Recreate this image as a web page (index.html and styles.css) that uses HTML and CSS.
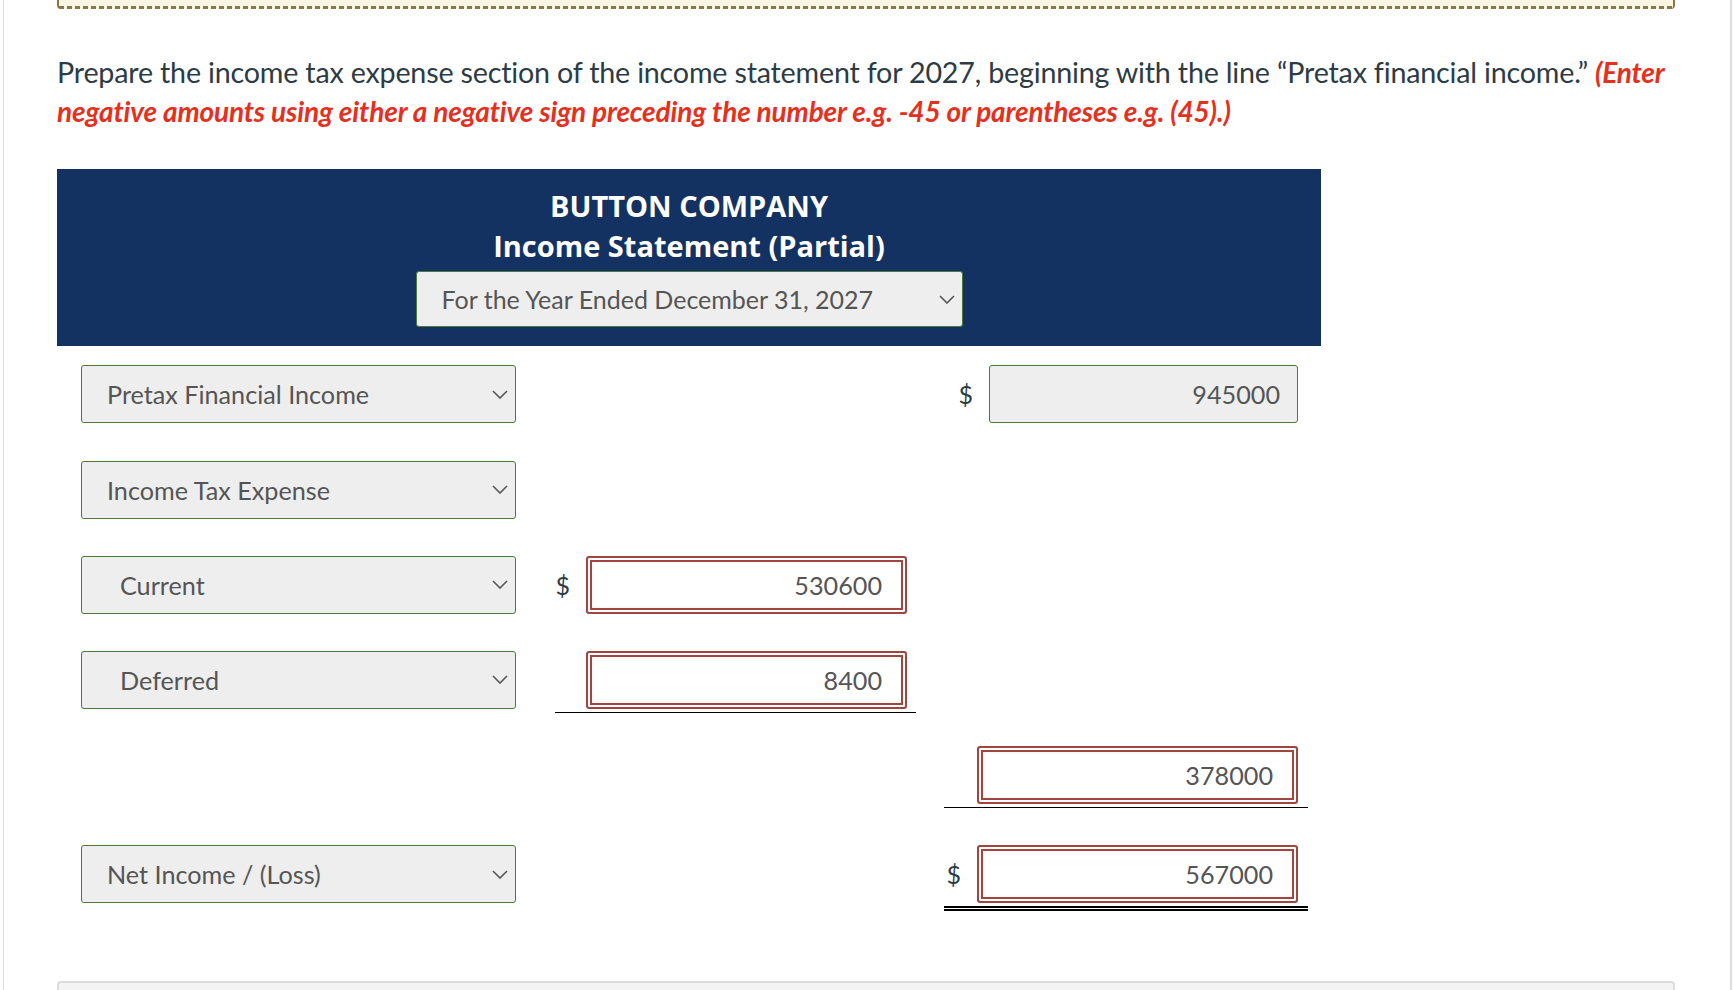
FILE: index.html
```html
<!DOCTYPE html>
<html lang="en">
<head>
<meta charset="utf-8">
<title>Income Statement (Partial)</title>
<link rel="stylesheet" href="styles.css">
</head>
<body>
<div class="page">
  <div class="notice"></div>

  <p class="prompt">Prepare the income tax expense section of the income statement for 2027, beginning with the line “Pretax financial income.” <em class="hint">(Enter negative amounts using either a negative sign preceding the number e.g. -45 or parentheses e.g. (45).)</em></p>

  <div class="statement">
    <div class="stmt-head">
      <div class="company">BUTTON COMPANY</div>
      <div class="title">Income Statement (Partial)</div>
      <div class="dropdown period">
        <span>For the Year Ended December 31, 2027</span>
        <svg class="chev" width="16" height="9" viewBox="0 0 16 9"><path d="M1 1 L8 8 L15 1" fill="none" stroke="#555" stroke-width="1.6"/></svg>
      </div>
    </div>

    <div class="rows">
      <div class="row">
        <div class="dropdown label"><span>Pretax Financial Income</span><svg class="chev" width="16" height="9" viewBox="0 0 16 9"><path d="M1 1 L8 8 L15 1" fill="none" stroke="#555" stroke-width="1.6"/></svg></div>
        <div class="cell col2"></div>
        <div class="cell col3"><span class="cur">$</span><input class="amt given" type="text" value="945000" readonly></div>
      </div>

      <div class="row">
        <div class="dropdown label"><span>Income Tax Expense</span><svg class="chev" width="16" height="9" viewBox="0 0 16 9"><path d="M1 1 L8 8 L15 1" fill="none" stroke="#555" stroke-width="1.6"/></svg></div>
        <div class="cell col2"></div>
        <div class="cell col3"></div>
      </div>

      <div class="row">
        <div class="dropdown label indent"><span>Current</span><svg class="chev" width="16" height="9" viewBox="0 0 16 9"><path d="M1 1 L8 8 L15 1" fill="none" stroke="#555" stroke-width="1.6"/></svg></div>
        <div class="cell col2"><span class="cur">$</span><input class="amt wrong" type="text" value="530600" readonly></div>
        <div class="cell col3"></div>
      </div>

      <div class="row">
        <div class="dropdown label indent"><span>Deferred</span><svg class="chev" width="16" height="9" viewBox="0 0 16 9"><path d="M1 1 L8 8 L15 1" fill="none" stroke="#555" stroke-width="1.6"/></svg></div>
        <div class="cell col2 under"><input class="amt wrong" type="text" value="8400" readonly></div>
        <div class="cell col3"></div>
      </div>

      <div class="row">
        <div class="label blank"></div>
        <div class="cell col2"></div>
        <div class="cell col3 under"><input class="amt wrong" type="text" value="378000" readonly></div>
      </div>

      <div class="row total">
        <div class="dropdown label"><span>Net Income / (Loss)</span><svg class="chev" width="16" height="9" viewBox="0 0 16 9"><path d="M1 1 L8 8 L15 1" fill="none" stroke="#555" stroke-width="1.6"/></svg></div>
        <div class="cell col2"></div>
        <div class="cell col3 double"><span class="cur">$</span><input class="amt wrong" type="text" value="567000" readonly></div>
      </div>
    </div>
  </div>

  <div class="footer-box"></div>
</div>
</body>
</html>
```

FILE: styles.css
```css
html, body {
  margin: 0;
  padding: 0;
  background: #fff;
}

body {
  font-family: Lato, "Open Sans", Arial, sans-serif;
  color: #2d3b45;
  overflow: hidden;
  height: 990px;
}

.page {
  margin-left: 3px;
  width: 1729px;
  box-sizing: border-box;
  min-height: 990px;
  border-left: 1px solid #dedede;
  border-right: 2px solid #dedede;
  padding: 0 55px 0 53px;
}

.notice {
  height: 40px;
  margin-top: -31px;
  box-sizing: border-box;
  background:
    repeating-linear-gradient(90deg, #8b7445 0 5px, transparent 5px 8px) left bottom / 100% 3px no-repeat,
    #fbf6e2;
  border-left: 2px solid #8b7445;
  border-right: 2px solid #8b7445;
  border-radius: 0 0 4px 4px;
}

.prompt {
  margin: 44px 0 0;
  font-size: 28.7px;
  line-height: 38.7px;
  letter-spacing: -0.2px;
}

.hint {
  color: #e5301d;
  font-weight: 700;
  font-style: italic;
  font-size: 28px;
  letter-spacing: -0.15px;
}

.statement {
  margin-top: 39px;
}

.stmt-head {
  width: 1264px;
  box-sizing: border-box;
  background: #143261;
  color: #fff;
  text-align: center;
  padding: 17px 0 19px;
  display: flex;
  flex-direction: column;
  align-items: center;
}

.company,
.title {
  font-family: "Open Sans", "Noto Sans", Lato, sans-serif;
  font-weight: 700;
  font-size: 29px;
  line-height: 39.5px;
}

.dropdown {
  display: flex;
  align-items: center;
  justify-content: space-between;
  box-sizing: border-box;
  height: 58px;
  background: #eeeeee;
  border: 1px solid #4b7a3c;
  border-radius: 3px;
  color: #555;
  font-size: 25.2px;
  padding: 0 7px 0 25px;
  text-align: left;
}

.period {
  width: 547px;
  height: 56px;
  margin-top: 6px;
  font-size: 25px;
}

.chev {
  flex: none;
}

.rows {
  margin-top: 19px;
  padding-left: 24px;
  display: flex;
  flex-direction: column;
  gap: 33.2px;
}

.row {
  display: flex;
  align-items: flex-start;
}

.row.total {
  margin-top: 4px;
}

.label {
  width: 435px;
  flex: none;
}

.label.indent {
  padding-left: 38px;
}

.label.blank {
  height: 58px;
  background: none;
  border: none;
}

.cell {
  display: flex;
  justify-content: flex-end;
  align-items: center;
  height: 62px;
  box-sizing: border-box;
  padding-bottom: 3px;
  border-bottom: 1px solid transparent;
  flex: none;
}

.col2 {
  width: 361px;
  margin-left: 39px;
  padding-right: 9px;
}

.col3 {
  width: 364px;
  margin-left: 28px;
  padding-right: 10px;
}

.cell.under {
  border-bottom-color: #000;
}

.cell.double {
  height: 66px;
  border-bottom: 5px double #000;
}

.cur {
  font-size: 25px;
  color: #2d3b45;
  margin-right: 16px;
}

.amt {
  font-family: Lato, "Open Sans", Arial, sans-serif;
  font-size: 25.2px;
  color: #555;
  text-align: right;
  height: 58px;
  box-sizing: border-box;
  margin: 0;
  outline: none;
}

.amt.given {
  width: 309px;
  background: #eeeeee;
  border: 1px solid #4b7a3c;
  border-radius: 3px;
  padding: 0 17px 0 10px;
}

.amt.wrong {
  width: 321px;
  background: #fff;
  border: 2px solid #a0463f;
  border-radius: 3px;
  box-shadow: inset 0 0 0 2px #fff, inset 0 0 0 4px #a0463f, inset 0 0 3px 5px rgba(0, 0, 0, 0.04);
  padding: 0 23px 0 10px;
}

.footer-box {
  margin-top: 70px;
  height: 60px;
  background: #f3f3f3;
  border: 2px solid #dcdcdc;
  border-radius: 4px;
}
```
